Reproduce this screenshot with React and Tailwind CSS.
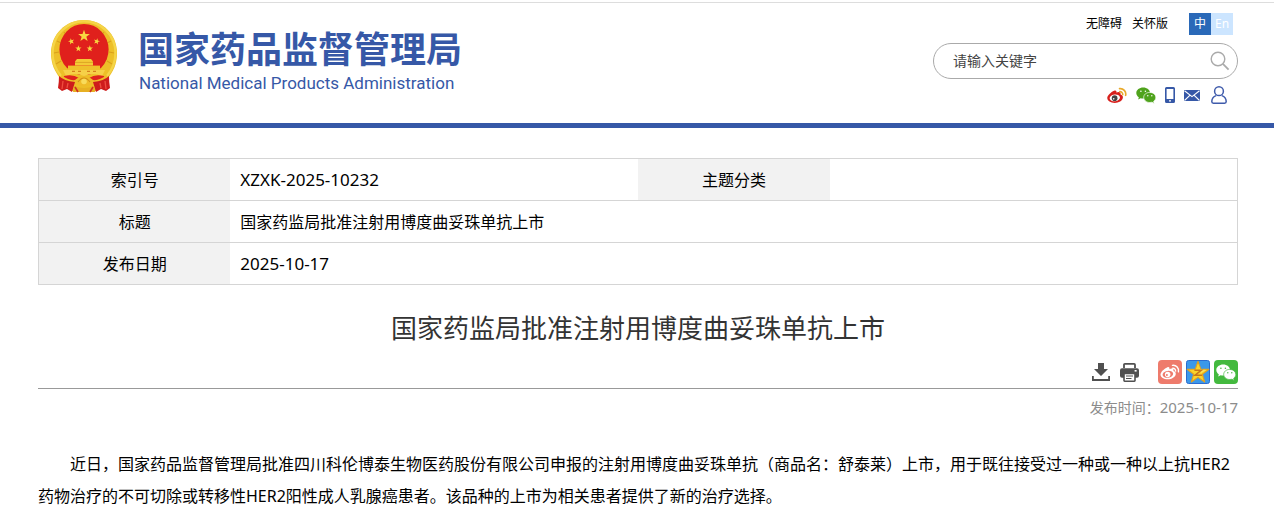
import React, { useState } from 'react';

const STAR =
  'M0 -10 L2.35 -3.24 L9.51 -3.09 L3.8 1.24 L5.88 8.09 L0 4 L-5.88 8.09 L-3.8 1.24 L-9.51 -3.09 L-2.35 -3.24 Z';

const Emblem = () => (
  <svg viewBox="0 0 66 73" className="w-[66px] h-[73px] shrink-0" aria-hidden="true">
    <path d="M33 0 C51 0 66 14 66 33 C66 44 62 52 57 58 L46 71 H20 L9 58 C4 52 0 44 0 33 C0 14 15 0 33 0 Z" fill="#edbf28" />
    <path d="M33 1.2 C50 1.2 64.5 15 64.5 33 C64.5 42 61 50 56 56 M33 1.2 C16 1.2 1.5 15 1.5 33 C1.5 42 5 50 10 56" fill="none" stroke="#f5d548" strokeWidth="2.4" />
    <path d="M13 12 L16 16 M6 21 L10 23 M3 33 L8 32 M5 44 L10 41 M53 12 L50 16 M60 21 L56 23 M63 33 L58 32 M61 44 L56 41" stroke="#d9a01c" strokeWidth="1.2" />
    <ellipse cx="33" cy="29.5" rx="24.6" ry="25.6" fill="#e0201c" />
    <g fill="#f8d640">
      <path d={STAR} transform="translate(33 16) scale(.62)" />
      <path d={STAR} transform="translate(20.3 21.4) rotate(-15) scale(.33)" />
      <path d={STAR} transform="translate(45.7 21.4) rotate(15) scale(.33)" />
      <path d={STAR} transform="translate(27.4 28.6) scale(.33)" />
      <path d={STAR} transform="translate(38.8 28.6) scale(.33)" />
    </g>
    <path d="M26 39 H40 L42 41.6 V45.6 H24 V41.6 Z" fill="#f4ca36" />
    <path d="M24 42.4 H42 M19 48.6 H47" stroke="#dda524" strokeWidth="1" />
    <path d="M17 45.6 H49 V50 H17 Z" fill="#efc02c" />
    <path d="M12 50 H54 L51 56 Q42 52 33 56 Q24 52 15 56 Z" fill="#f6d048" />
    <path d="M21 51.4 h3 M27 51.4 h3 M36 51.4 h3 M42 51.4 h3" stroke="#d5801c" strokeWidth="1.4" />
    <path d="M13 56 Q22 54 28 58 L24 63 Q17 62 12 59 Z M53 56 Q44 54 38 58 L42 63 Q49 62 54 59 Z" fill="#df241e" />
    <path d="M10 55 Q18 61 24 60 Q33 52 42 60 Q48 61 56 55 L54 61 Q46 65 41 64 Q33 69 25 64 Q20 65 12 61 Z" fill="#efbb28" />
    <path d="M27 62 Q33 54 39 62" fill="none" stroke="#d18d18" strokeWidth="1.2" />
    <circle cx="33" cy="61.5" r="2.8" fill="#f8db5b" />
    <path d="M8 56 Q13 61 24 62 L21 72 L16 69 L11 71 L7 68 Q8 62 8 56 Z" fill="#ce1c1c" />
    <path d="M58 56 Q53 61 42 62 L45 72 L50 69 L55 71 L59 68 Q58 62 58 56 Z" fill="#ce1c1c" />
    <path d="M12 61 L11 69 M17 63 L16 68 M54 61 L55 69 M49 63 L50 68" stroke="#ef4d3f" strokeWidth="1.3" />
    <path d="M23 66 Q33 70 43 66 L44 72 H22 Z" fill="#e7b023" />
    <path d="M24 67 L27 72 M42 67 L39 72" stroke="#cf3220" strokeWidth="1.6" />
  </svg>
);

const WeiboIcon = ({ body, iris, waves, className }) => (
  <svg viewBox="0 0 22 18" className={className} aria-hidden="true">
    <path
      fill={body}
      d="M7.8 3.8 C9.4 3 10.8 3.6 10.3 5.8 C12.6 4.8 15.4 4.8 14.9 7.8 C16.6 8.4 17.7 9.4 17.5 11.2 C17.1 14.8 12.9 17.2 8.5 17.2 C4.1 17.2 .3 15 .3 11.8 C.3 9 4.4 5.2 7.8 3.8 Z"
    />
    <ellipse cx="8.6" cy="11.6" rx="5.7" ry="3.7" fill="#fff" transform="rotate(-8 8.6 11.6)" />
    <circle cx="8.4" cy="11.9" r="3.1" fill={iris} />
    <circle cx="7.4" cy="12.7" r=".9" fill="#fff" />
    <path d="M13.8 1.5 A6 6 0 0 1 20.5 8.8 M14.1 4.8 A3 3 0 0 1 17.3 8" fill="none" stroke={waves} strokeWidth="1.8" strokeLinecap="round" />
  </svg>
);

// the share button uses the mark in one colour, with a ring for the eye
const WeiboMark = () => (
  <svg viewBox="0 0 22 18" className="h-4 w-5" aria-hidden="true">
    <path
      fill="#fff"
      d="M7.8 3.8 C9.4 3 10.8 3.6 10.3 5.8 C12.6 4.8 15.4 4.8 14.9 7.8 C16.6 8.4 17.7 9.4 17.5 11.2 C17.1 14.8 12.9 17.2 8.5 17.2 C4.1 17.2 .3 15 .3 11.8 C.3 9 4.4 5.2 7.8 3.8 Z"
    />
    <ellipse cx="8.6" cy="11.6" rx="6" ry="3.9" fill="#ee7b6c" transform="rotate(-8 8.6 11.6)" />
    <circle cx="8.4" cy="11.8" r="3.1" fill="#fff" />
    <circle cx="7.5" cy="12.4" r="1.1" fill="#ee7b6c" />
    <path d="M13.8 1.5 A6 6 0 0 1 20.5 8.8 M14.1 4.8 A3 3 0 0 1 17.3 8" fill="none" stroke="#fff" strokeWidth="1.6" strokeLinecap="round" />
  </svg>
);

const WechatIcon = ({ color, eyes, className }) => (
  <svg viewBox="0 0 20 17" className={className} aria-hidden="true">
    <path d="M7.2 .5 C11 .5 14 2.9 14 6 C14 9.2 11 11.6 7.2 11.6 C6.3 11.6 5.4 11.5 4.6 11.2 L2.2 12.6 L2.8 10.3 C1.2 9.2 .3 7.7 .3 6 C.3 2.9 3.4 .5 7.2 .5 Z" fill={color} />
    <path
      d="M13.8 5.4 C17.3 5.4 19.8 7.7 19.8 10.4 C19.8 12 19 13.3 17.7 14.2 L18.2 16.4 L16 15.2 C15.3 15.4 14.6 15.5 13.8 15.5 C10.3 15.5 7.7 13.1 7.7 10.4 C7.7 7.6 10.3 5.4 13.8 5.4 Z"
      fill={color}
      stroke={eyes}
      strokeWidth=".7"
    />
    <g fill={eyes}>
      <circle cx="4.9" cy="4.3" r=".8" />
      <circle cx="9.4" cy="4.3" r=".8" />
      <circle cx="11.8" cy="8.8" r=".7" />
      <circle cx="15.8" cy="8.8" r=".7" />
    </g>
  </svg>
);

const PhoneIcon = () => (
  <svg viewBox="0 0 10 16" className="w-[10px] h-4" aria-hidden="true">
    <path fillRule="evenodd" fill="#3658a7" d="M1.5 0 H8.5 Q10 0 10 1.5 V14.5 Q10 16 8.5 16 H1.5 Q0 16 0 14.5 V1.5 Q0 0 1.5 0 Z M1.6 2 V12 H8.4 V2 Z M4 13.2 V14.6 H6 V13.2 Z" />
  </svg>
);

const MailIcon = () => (
  <svg viewBox="0 0 16 11" className="w-4 h-[11px]" aria-hidden="true">
    <rect width="16" height="11" fill="#3658a7" />
    <path d="M.5 .8 L8 6.6 L15.5 .8 M.5 10.5 L5.8 5.4 M15.5 10.5 L10.2 5.4" fill="none" stroke="#fff" strokeWidth="1.1" />
  </svg>
);

const UserIcon = () => (
  <svg viewBox="0 0 16 18" className="w-4 h-[18px]" fill="none" stroke="#3f5bab" strokeWidth="1.5" aria-hidden="true">
    <circle cx="8" cy="5.2" r="4.4" />
    <path d="M5.2 9.6 C2.4 10.6 .8 12.8 .8 15.6 Q.8 17.2 2.4 17.2 H13.6 Q15.2 17.2 15.2 15.6 C15.2 12.8 13.6 10.6 10.8 9.6" />
  </svg>
);

const SearchIcon = () => (
  <svg viewBox="0 0 20 20" className="w-5 h-5" fill="none" stroke="#aaa" strokeWidth="1.4" aria-hidden="true">
    <circle cx="8" cy="8" r="6.8" />
    <path d="M12.9 12.9 L18.6 18.6" strokeWidth="1.8" />
  </svg>
);

const DownloadIcon = () => (
  <svg viewBox="0 0 18 18" className="w-[18px] h-[18px]" fill="#505050" aria-hidden="true">
    <path d="M6 0 H12 V6 H16 L9 13 L2 6 H6 Z" />
    <path d="M0 13 H1.8 V16 H16.2 V13 H18 V18 H0 Z" />
  </svg>
);

const PrintIcon = () => (
  <svg viewBox="0 0 19 19" className="w-[19px] h-[19px]" aria-hidden="true">
    <path d="M4 5 V1.8 Q4 .9 4.9 .9 H14.1 Q15 .9 15 1.8 V5" fill="none" stroke="#505050" strokeWidth="1.8" />
    <rect y="5.2" width="19" height="9.6" rx="2" fill="#505050" />
    <rect x="14.6" y="7" width="2" height="1.6" fill="#fff" />
    <rect x="4" y="10.4" width="11" height="7.8" rx=".6" fill="#fff" stroke="#505050" strokeWidth="1.6" />
    <path d="M6 13 H13 M6 15.5 H11.5" stroke="#505050" strokeWidth="1.2" />
  </svg>
);

const QzoneIcon = () => (
  <svg viewBox="0 0 24 24" className="w-6 h-6" aria-hidden="true">
    <rect x=".5" y=".5" width="23" height="23" rx="2" fill="#3b98ea" stroke="#2a6bd0" />
    <path d={STAR} transform="translate(12 12.8) scale(1.14)" fill="#fbd42c" stroke="#e3a11f" strokeWidth="1" strokeLinejoin="round" />
    <path d="M12 3 L14.4 9.5 L20.5 10 L15 13 Z" fill="#fde25a" />
    <path d="M8.4 10.2 H15.4 L9 15.2 H16" fill="none" stroke="#c9761a" strokeWidth="1.5" />
  </svg>
);

const Header = () => {
  const [keyword, setKeyword] = useState('');

  return (
    <header className="mt-0.5 border-t border-t-[#ddd] border-b-[5px] border-b-[#3658a7]">
      <div className="flex justify-between pl-[51px] pr-9 pt-2.5 pb-[19px]">
        <a href="#" className="flex items-start gap-[21px] pt-[7px] text-[#3658a7]">
          <Emblem />
          <div className="pt-1">
            <div className="text-[36px] leading-[46px] font-bold font-['Noto_Sans_CJK_SC',sans-serif]">国家药品监督管理局</div>
            <div className="pl-px text-[17px] leading-[26px] font-['Roboto',sans-serif]">
              National Medical Products Administration
            </div>
          </div>
        </a>

        <div className="flex w-[305px] flex-col">
          <div className="flex items-center justify-end pr-[5px] text-xs leading-[22px]">
            <a href="#">无障碍</a>
            <a href="#" className="ml-2.5">关怀版</a>
            <a href="#" className="ml-[21px] w-[22px] bg-[#2a69b8] text-center text-white">中</a>
            <a href="#" className="w-[22px] bg-[#cce5ff] text-center text-white">En</a>
          </div>

          <form
            className="mt-2 flex h-9 items-center rounded-full border border-[#aaa] pl-[19px] pr-[7px]"
            onSubmit={(e) => e.preventDefault()}
          >
            <input
              type="text"
              aria-label="请输入关键字"
              placeholder="请输入关键字"
              value={keyword}
              onChange={(e) => setKeyword(e.target.value)}
              className="min-w-0 flex-1 text-sm text-[#333] outline-none placeholder:text-[#444]"
            />
            <button type="submit" aria-label="搜索">
              <SearchIcon />
            </button>
          </form>

          <div className="mt-[7px] flex items-center justify-end gap-[9px] pr-[11px]">
            <a href="#" aria-label="微博">
              <WeiboIcon body="#d8201c" iris="#444" waves="#e9aa2c" className="h-[17px] w-5" />
            </a>
            <a href="#" aria-label="微信">
              <WechatIcon color="#4fa31c" eyes="#fff" className="h-[17px] w-5" />
            </a>
            <a href="#" aria-label="手机版"><PhoneIcon /></a>
            <a href="#" aria-label="邮箱"><MailIcon /></a>
            <a href="#" aria-label="个人中心" className="ml-0.5"><UserIcon /></a>
          </div>
        </div>
      </div>
    </header>
  );
};

const InfoTable = () => (
  <table className="w-full table-fixed border-collapse border border-[#d5d5d5]">
    <colgroup>
      <col className="w-[16%]" />
      <col className="w-[34%]" />
      <col className="w-[16%]" />
      <col className="w-[34%]" />
    </colgroup>
    <tbody>
      <tr className="h-[42px] border-b border-[#d5d5d5]">
        <th scope="row" className="bg-[#f2f2f2] font-normal">索引号</th>
        <td className="px-2.5 text-[17px]">XZXK-2025-10232</td>
        <th scope="row" className="bg-[#f2f2f2] font-normal">主题分类</th>
        <td className="px-2.5" />
      </tr>
      <tr className="h-[42px] border-b border-[#d5d5d5]">
        <th scope="row" className="bg-[#f2f2f2] font-normal">标题</th>
        <td colSpan={3} className="px-2.5">国家药监局批准注射用博度曲妥珠单抗上市</td>
      </tr>
      <tr className="h-[42px]">
        <th scope="row" className="bg-[#f2f2f2] font-normal">发布日期</th>
        <td colSpan={3} className="px-2.5 text-[17px]">2025-10-17</td>
      </tr>
    </tbody>
  </table>
);

const ShareBar = () => (
  <div className="flex h-[29px] items-start justify-end border-b border-[#999]">
    <button type="button" aria-label="下载" className="mr-2.5 flex h-6 items-center"><DownloadIcon /></button>
    <button type="button" aria-label="打印" className="mr-[19px] flex h-6 items-center"><PrintIcon /></button>
    <div className="flex gap-1">
      <a href="#" aria-label="分享到微博" className="flex h-6 w-6 items-center justify-center rounded-sm bg-[#ee7b6c]">
        <WeiboMark />
      </a>
      <a href="#" aria-label="分享到QQ空间"><QzoneIcon /></a>
      <a href="#" aria-label="分享到微信" className="flex h-6 w-6 items-center justify-center rounded-sm bg-[#43b93e]">
        <WechatIcon color="#fff" eyes="#43b93e" className="h-[17px] w-5" />
      </a>
    </div>
  </div>
);

const App = () => (
  <div lang="zh-CN" className="flow-root bg-white text-base text-black font-['Noto_Sans','Noto_Sans_CJK_SC',sans-serif]">
    <Header />
    <main className="pl-[38px] pr-9 pt-[30px]">
      <InfoTable />
      <h1 className="mt-[23px] text-center text-[26px] leading-10 text-[#333]">国家药监局批准注射用博度曲妥珠单抗上市</h1>
      <div className="mt-3">
        <ShareBar />
      </div>
      <p className="mt-1.5 text-right text-sm leading-6 text-[#8c8c8c]">
        发布时间：<span className="text-[15px]">2025-10-17</span>
      </p>
      <p className="mt-7 indent-8 leading-8">
        近日，国家药品监督管理局批准四川科伦博泰生物医药股份有限公司申报的注射用博度曲妥珠单抗（商品名：舒泰莱）上市，用于既往接受过一种或一种以上抗HER2药物治疗的不可切除或转移性HER2阳性成人乳腺癌患者。该品种的上市为相关患者提供了新的治疗选择。
      </p>
    </main>
  </div>
);

export default App;
